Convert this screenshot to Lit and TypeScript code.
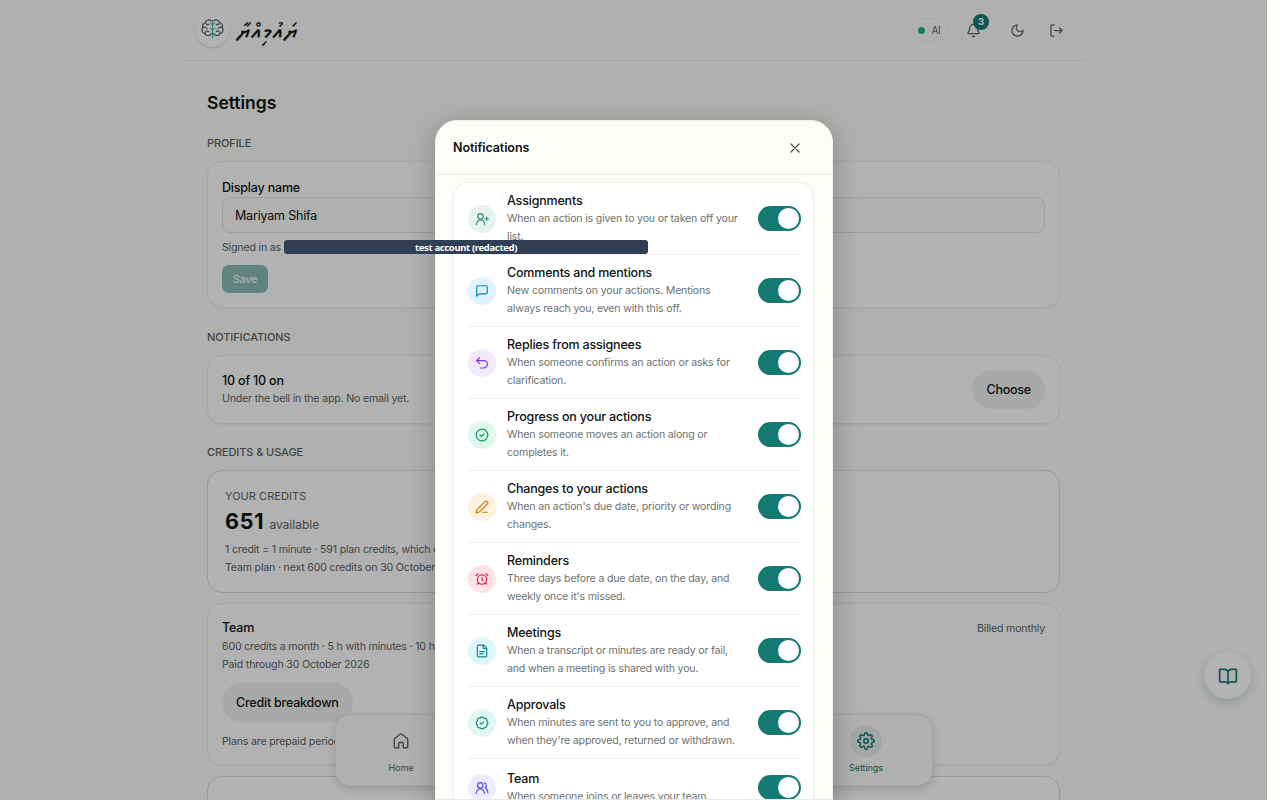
import { LitElement, html, css, svg } from "lit";
import { customElement } from "lit/decorators.js";

const ROWS = [
  { id: "assign", title: "Assignments", lines: ["When an action is given to you or taken off your", "list."] },
  { id: "comment", title: "Comments and mentions", lines: ["New comments on your actions. Mentions", "always reach you, even with this off."] },
  { id: "reply", title: "Replies from assignees", lines: ["When someone confirms an action or asks for", "clarification."] },
  { id: "progress", title: "Progress on your actions", lines: ["When someone moves an action along or", "completes it."] },
  { id: "change", title: "Changes to your actions", lines: ["When an action's due date, priority or wording", "changes."] },
  { id: "remind", title: "Reminders", lines: ["Three days before a due date, on the day, and", "weekly once it's missed."] },
  { id: "meeting", title: "Meetings", lines: ["When a transcript or minutes are ready or fail,", "and when a meeting is shared with you."] },
  { id: "approve", title: "Approvals", lines: ["When minutes are sent to you to approve, and", "when they're approved, returned or withdrawn."] },
  { id: "team", title: "Team", lines: ["When someone joins or leaves your team."] },
];

const GLYPHS: Record<string, unknown> = {
  assign: svg`<path d="M2.500 21.500c0-4.500 3-7.800 7-7.800s7 3.300 7 7.800"/><circle cx="9.500" cy="7.500" r="4.600"/><path d="M20 8.500v6M23 11.500h-6"/>`,
  comment: svg`<path d="M21 15a2 2 0 0 1-2 2H7l-4 4V5a2 2 0 0 1 2-2h14a2 2 0 0 1 2 2z"/>`,
  reply: svg`<path d="M8 13 3 8l5-5"/><path d="M3 8h12a6 6 0 0 1 0 12.500H9.500"/>`,
  progress: svg`<circle cx="12" cy="12" r="10"/><path d="m8.500 12 2.500 2.500 4.500-4.500"/>`,
  change: svg`<path d="M13 21h8"/><path d="M21.170 6.810a2.800 2.800 0 0 0-3.980-3.980L3.840 16.170a2 2 0 0 0-.5.83l-1.320 4.350a.5.5 0 0 0 .62.620l4.350-1.320a2 2 0 0 0 .83-.5z"/>`,
  remind: svg`<circle cx="12" cy="13" r="8"/><path d="M12 9v4l2 2M5 3 2 6M22 6l-3-3M6.400 18.700 4 21M17.600 18.700 20 21"/>`,
  meeting: svg`<path d="M15 2H6a2 2 0 0 0-2 2v16a2 2 0 0 0 2 2h12a2 2 0 0 0 2-2V7z"/><path d="M14 2v4a2 2 0 0 0 2 2h4M16 13H8M14 17H8"/>`,
  approve: svg`<path d="M3.850 8.620a4 4 0 0 1 4.780-4.770 4 4 0 0 1 6.740 0 4 4 0 0 1 4.780 4.780 4 4 0 0 1 0 6.740 4 4 0 0 1-4.770 4.780 4 4 0 0 1-6.750 0 4 4 0 0 1-4.780-4.770 4 4 0 0 1 0-6.760Z"/><path d="m9 12 2 2 4-4"/>`,
  team: svg`<path d="M2 21.500c0-4.500 3-7.800 7-7.800s7 3.300 7 7.800"/><circle cx="9" cy="7.500" r="4.600"/><path d="M16 3.200a4.600 4.600 0 0 1 1.500 8.300c2.800 1.500 4.500 4.500 4.500 8.500"/>`,
  bell: svg`<path d="M10.270 21a2 2 0 0 0 3.460 0M3.260 15.330A1 1 0 0 0 4 17h16a1 1 0 0 0 .74-1.670C19.410 13.960 18 12.500 18 8A6 6 0 0 0 6 8c0 4.500-1.410 5.960-2.740 7.330"/>`,
  moon: svg`<path d="M12 3a6 6 0 0 0 9 9 9 9 0 1 1-9-9Z"/>`,
  exit: svg`<path d="M8 3H5a2 2 0 0 0-2 2v14a2 2 0 0 0 2 2h3M17 16l4-4-4-4M21 12H9"/>`,
  close: svg`<path d="M18 6 6 18M6 6l12 12"/>`,
  home: svg`<path d="M3 10.200a2 2 0 0 1 .75-1.550l7-5.700a2 2 0 0 1 2.500 0l7 5.700a2 2 0 0 1 .75 1.550V20a1 1 0 0 1-1 1h-5v-6a1 1 0 0 0-1-1h-4a1 1 0 0 0-1 1v6H4a1 1 0 0 1-1-1z"/>`,
  book: svg`<path d="M12 6.500v14.500M12 6.500C11 5 9.500 4 8 4H2v15h6c1.700 0 3 .5 4 2 1-1.500 2.300-2 4-2h6V4h-6c-1.500 0-3 1-4 2.500z"/>`,
  gear: svg`<circle cx="12" cy="12" r="3"/><path d="M19.400 15a1.650 1.650 0 0 0 .33 1.820l.06.06a2 2 0 1 1-2.830 2.830l-.06-.06a1.650 1.650 0 0 0-2.800 1.180V21a2 2 0 1 1-4 0v-.09a1.650 1.650 0 0 0-2.900-1.260l-.06.06a2 2 0 1 1-2.830-2.830l.06-.06a1.650 1.650 0 0 0-1.180-2.800H3a2 2 0 1 1 0-4h.09a1.650 1.650 0 0 0 1.260-2.900l-.06-.06a2 2 0 1 1 2.830-2.830l.06.06a1.650 1.650 0 0 0 2.820-1.180V3a2 2 0 1 1 4 0v.09a1.650 1.650 0 0 0 2.800 1.180l.06-.06a2 2 0 1 1 2.830 2.830l-.06.06a1.650 1.650 0 0 0 1.180 2.820H21a2 2 0 1 1 0 4h-.09a1.650 1.650 0 0 0-1.510 1.080z"/>`,
};

const icon = (name: string) => html`<svg class="ic" viewBox="0 0 24 24">${GLYPHS[name]}</svg>`;

@customElement("app-root")
export class AppRoot extends LitElement {
  static styles = css`
    :host { display: block; position: relative; width: 1280px; height: 800px; overflow: hidden; background: #fcfcf9; color: #101413; font: 12.5px/18px Inter, "Liberation Sans", sans-serif; letter-spacing: -.19px; }
    * { box-sizing: border-box; }
    .ic { display: block; width: 14px; height: 14px; fill: none; stroke: currentColor; stroke-width: 2; stroke-linecap: round; stroke-linejoin: round; overflow: visible; }
    .page { width: 1267px; height: 800px; overflow: hidden; }
    header { width: 907px; height: 61px; margin-left: 180px; padding: 0 13px 0 16px; display: flex; align-items: center; background: #fdfdfc; border-bottom: 1px solid #e9eae9; }
    .logo { width: 33px; height: 33px; border-radius: 50%; background: #fff; box-shadow: 0 1px 2px #0000002b; display: grid; place-items: center; }
    .logo svg { width: 23px; height: 20px; fill: none; stroke: #46555f; stroke-width: 1.1; margin-top: -3px; }
    .logo .mid { stroke: #58b5a9; }
    .word { margin-left: 8px; padding-top: 3px; font: 400 23px/30px "Noto Sans Thaana", "MV Boli", FreeSerif, Inter, sans-serif; letter-spacing: 1.3px; -webkit-text-stroke: .3px currentColor; direction: rtl; }
    .tools { margin-left: auto; display: flex; align-items: center; color: #5d6462; }
    .tools .ic { width: 15px; height: 15px; }
    .ai { height: 24px; width: 37px; border: 1px solid #f1f1ef; border-radius: 12px; display: flex; align-items: center; justify-content: center; gap: 6px; font-size: 10px; margin-right: 18px; }
    .dot { width: 7px; height: 7px; border-radius: 50%; background: #10b981; }
    .bell { position: relative; margin-right: 29px; }
    .count { position: absolute; left: 7px; top: -9px; width: 16px; height: 16px; border-radius: 50%; background: #147a73; color: #fff; font: 700 9.5px/16px Inter; letter-spacing: 0; text-align: center; }
    .moon { margin-right: 24px; }
    .exit { margin-right: 10px; }
    main { width: 853px; margin-left: 207px; padding-top: 31px; }
    h1 { margin: 0; font-size: 17.5px; line-height: 22px; font-weight: 600; letter-spacing: 0; }
    h2 { margin: 0; font-size: 11px; line-height: 16px; font-weight: 500; letter-spacing: -.1px; color: #5d6462; }
    .h-a { margin-top: 21px; } .h-b { margin-top: 21px; } .h-c { margin-top: 20px; }
    .card { border: 1px solid #eeeeec; border-radius: 15px; background: #fff; box-shadow: 0 1px 2px #0000000d; padding: 0 14px; display: flex; flex-direction: column; align-items: flex-start; }
    .profile { height: 147px; margin-top: 10px; padding-top: 17px; }
    .b { font-weight: 500; line-height: 18px; }
    .s { font-size: 10.6px; line-height: 18px; letter-spacing: -.18px; color: #5d6462; }
    .caps { font-size: 11px; letter-spacing: .05px; }
    .field { width: 823px; height: 36px; border: 1px solid #e2e3e0; border-radius: 9px; background: #fcfcf9; padding: 0 12px; line-height: 35px; }
    .signed { margin-top: 6px; }
    .save { margin-top: 8px; height: 28px; width: 46px; border-radius: 7px; background: #8abcb8; color: #f4faf9; font: 500 10.8px/29px Inter; text-align: center; }
    .note { height: 69px; margin-top: 10px; flex-direction: row; align-items: center; justify-content: space-between; }
    .note-text { padding-top: 1px; }
    .pill { height: 39px; border-radius: 20px; background: #f1f4f4; padding: 0 14px; font-weight: 500; line-height: 39px; letter-spacing: -.22px; }
    .credits { height: 123px; margin-top: 10px; padding: 16px 17px 0; border-color: #dededb; box-shadow: none; }
    .amount { display: flex; align-items: baseline; gap: 5px; margin-top: 2px; height: 32px; }
    .big { font-size: 21.5px; line-height: 28px; font-weight: 700; letter-spacing: .8px; }
    .avail { font-size: 12px; letter-spacing: 0; color: #5d6462; }
    .credits .first { margin-top: 2px; }
    .team { height: 162px; margin-top: 10px; padding-top: 15px; }
    .top { align-self: stretch; display: flex; justify-content: space-between; }
    .top .s { padding-top: 1px; }
    .team .pill { margin-top: 9px; }
    .plans { margin-top: 11px; }
    .next { height: 60px; margin-top: 11px; border-color: #dededb; }
    .nav { position: absolute; left: 335px; top: 714px; width: 598px; height: 72px; padding: 0 33px 0 32px; border: 1px solid #ecece9; border-radius: 15px; background: #fcfcf9; box-shadow: 0 3px 8px #00000024; display: flex; justify-content: space-between; }
    .tab { width: 66px; padding-top: 10px; display: flex; flex-direction: column; align-items: center; font-size: 9px; letter-spacing: -.05px; line-height: 12px; color: #5d6462; gap: 5px; }
    .tab .ring { width: 32px; height: 32px; border-radius: 50%; display: grid; place-items: center; }
    .tab .ic { width: 18px; height: 18px; stroke-width: 1.8; }
    .tab.on { color: #147a73; } .tab.on .ring { background: #e5efed; }
    .tab.on .ic { stroke-width: 2; }
    .help { position: absolute; left: 1204px; top: 652px; width: 47px; height: 47px; border-radius: 50%; background: #fff; box-shadow: 0 4px 10px #147a7333; display: grid; place-items: center; color: #147a73; }
    .help .ic { width: 20px; height: 20px; }
    .shade { position: absolute; inset: 0 13px 0 0; background: #0000004d; border-right: 1px solid #0000000d; }
    .dialog { position: absolute; left: 435px; top: 120px; width: 398px; height: 720px; border: 1px solid #f3f4f1; border-radius: 22px; background: #fcfdf9; box-shadow: 0 6px 28px #00000040; }
    .bar { height: 54px; padding: 0 29px 0 17px; display: flex; align-items: center; justify-content: space-between; border-bottom: 1px solid #e9eae8; font-weight: 600; letter-spacing: -.09px; }
    .bar .ic { width: 16px; height: 16px; color: #4a514f; stroke-width: 1.8; }
    .scroll { height: 625px; overflow: hidden; padding: 7px 18px 0 17px; border-bottom: 1px solid #e9eae8; }
    .list { border: 1px solid #eeeeec; border-radius: 15px; background: #fff; box-shadow: 0 1px 2px #0000000d; padding: 0 13px 0 14px; height: 700px; }
    .row { height: 72px; display: flex; align-items: center; border-bottom: 1px solid #eeefee; }
    .row.team-row { height: 58px; }
    .badge { width: 28px; height: 28px; border-radius: 50%; display: grid; place-items: center; margin-right: 11px; flex: none; }
    .txt { flex: 1; white-space: nowrap; padding-top: 1px; }
    .txt .s { color: #6d7371; }
    .switch { width: 43px; height: 25px; margin-right: -1px; border-radius: 13px; background: #147a73; padding: 2px; display: flex; justify-content: flex-end; flex: none; }
    .knob { width: 21px; height: 21px; border-radius: 50%; background: #fff; }
    .assign { background: #e7f1ef; color: #2a8a75; } .comment { background: #e0f2fe; color: #0284c7; } .reply { background: #f1eafe; color: #8234df; }
    .progress { background: #def8ec; color: #059669; } .change { background: #fef3e0; color: #d97706; } .remind { background: #ffe2e8; color: #e11d5c; }
    .meeting { background: #def7fb; color: #0e8299; } .approve { background: #dff8f1; color: #0d8878; } .team-i { background: #eeecff; color: #5b48e0; }
    .redact { position: absolute; left: 284px; top: 240px; width: 364px; height: 14px; border-radius: 3px; background: #303f55; color: #fff; font: 700 9.5px/16px "Noto Sans", sans-serif; letter-spacing: -.35px; text-align: center; }
  `;

  render() {
    return html`
      <div class="page">
        <header>
          <div class="logo"><svg viewBox="0 0 23 20"><path d="M10.500 2C8 0 5 1 4.500 3.500 2 4 1 6.500 2 8.500 0 10.500 1 14 4 14.500 5 17 8 17 10 15.500M12.500 2C15 0 18 1 18.500 3.500 21 4 22 6.500 21 8.500 23 10.500 22 14 19 14.500 18 17 15 17 13 15.500M4.500 3.500C5 6 7 6 8 5M2 8.500c2-1 4 0 4 2M18.500 3.500c-.5 2.500-2.500 2.500-3.500 1.500M21 8.500c-2-1-4 0-4 2M4 14.500c0-2 2-3 4-2M19 14.500c0-2-2-3-4-2"/><path class="mid" d="M11.500 1v18M9.500 4l2 2 2-2M9 9l2.500 2L14 9M9.500 14l2 2 2-2"/></svg></div>
          <div class="word">ޔައުމިއްޔާ</div>
          <div class="tools">
            <div class="ai"><span class="dot"></span>AI</div>
            <div class="bell">${icon("bell")}<span class="count">3</span></div>
            <div class="moon">${icon("moon")}</div>
            <div class="exit">${icon("exit")}</div>
          </div>
        </header>
        <main>
          <h1>Settings</h1>
          <h2 class="h-a">PROFILE</h2>
          <section class="card profile">
            <div class="b">Display name</div>
            <div class="field">Mariyam Shifa</div>
            <div class="s signed">Signed in as</div>
            <div class="save">Save</div>
          </section>
          <h2 class="h-b">NOTIFICATIONS</h2>
          <section class="card note">
            <div class="note-text"><div class="b">10 of 10 on</div><div class="s">Under the bell in the app. No email yet.</div></div>
            <div class="pill">Choose</div>
          </section>
          <h2 class="h-c">CREDITS &amp; USAGE</h2>
          <section class="card credits">
            <div class="s caps">YOUR CREDITS</div>
            <div class="amount"><span class="big">651</span><span class="avail">available</span></div>
            <div class="s first">1 credit = 1 minute · 591 plan credits, which expire</div>
            <div class="s">Team plan · next 600 credits on 30 October 2026</div>
          </section>
          <section class="card team">
            <div class="top"><span class="b">Team</span><span class="s">Billed monthly</span></div>
            <div class="s">600 credits a month · 5 h with minutes · 10 h</div>
            <div class="s">Paid through 30 October 2026</div>
            <div class="pill">Credit breakdown</div>
            <div class="s plans">Plans are prepaid periods.</div>
          </section>
          <section class="card next"></section>
        </main>
      </div>
      <nav class="nav">
        <div class="tab"><span class="ring">${icon("home")}</span>Home</div>
        <div class="tab on"><span class="ring">${icon("gear")}</span>Settings</div>
      </nav>
      <div class="help">${icon("book")}</div>
      <div class="shade"></div>
      <div class="dialog">
        <div class="bar">Notifications ${icon("close")}</div>
        <div class="scroll">
          <div class="list">
            ${ROWS.map((r) => html`
              <div class="row ${r.id === "team" ? "team-row" : ""}">
                <span class="badge ${r.id === "team" ? "team-i" : r.id}">${icon(r.id)}</span>
                <div class="txt"><div class="b">${r.title}</div>${r.lines.map((l) => html`<div class="s">${l}</div>`)}</div>
                <span class="switch"><span class="knob"></span></span>
              </div>`)}
          </div>
        </div>
      </div>
      <div class="redact">test account (redacted)</div>
    `;
  }
}
